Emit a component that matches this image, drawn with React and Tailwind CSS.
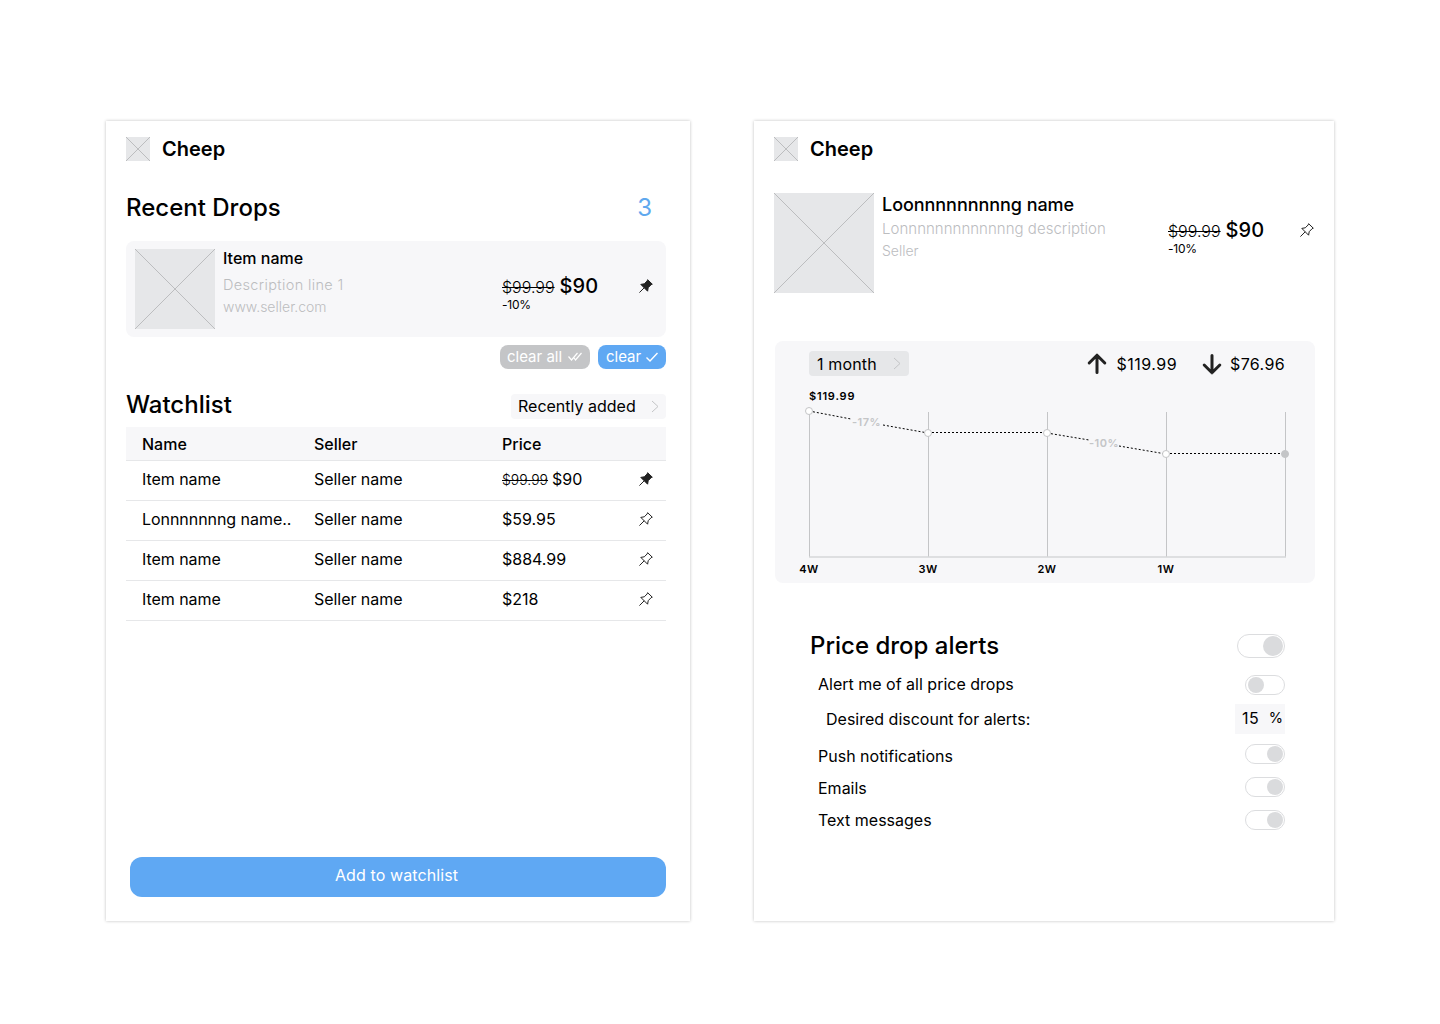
import React, { useState } from 'react';

const watchlist = [
    { name: 'Item name', seller: 'Seller name', price: '$90', oldPrice: '$99.99', pinned: true },
    { name: 'Lonnnnnnng name..', seller: 'Seller name', price: '$59.95' },
    { name: 'Item name', seller: 'Seller name', price: '$884.99' },
    { name: 'Item name', seller: 'Seller name', price: '$218' },
];

const history = [
    { x: 34, y: 70, label: '4W' },
    { x: 153, y: 92, label: '3W' },
    { x: 272, y: 92, label: '2W' },
    { x: 391, y: 113, label: '1W' },
    { x: 510, y: 113 },
];

const Placeholder = ({ className }) => (
    <svg className={`shrink-0 bg-[#e6e7e9] ${className}`} viewBox="0 0 100 100" preserveAspectRatio="none">
        <path d="M0 0L100 100M100 0L0 100" stroke="#bcbdbf" strokeWidth="1" vectorEffect="non-scaling-stroke" />
    </svg>
);

const Pin = ({ filled }) => (
    <svg width="14" height="14" viewBox="0 0 14 14" fill="none" stroke="#222" strokeLinejoin="round" className="shrink-0">
        <path d="M8.6 0.7L13.3 5.2L12.1 5.7L9.2 8.7L8.6 12.2L1.8 5.4L5.3 4.8L8.2 1.9Z" fill={filled ? '#222' : 'none'} />
        <path d="M5.2 8.8L0.4 13.6" />
    </svg>
);

const Chevron = () => (
    <svg width="8" height="13" viewBox="0 0 8 13" fill="none" stroke="#c4c5c7">
        <path d="M1 1l6 5.5L1 12" />
    </svg>
);

const Arrow = ({ down }) => (
    <svg width="20" height="22" viewBox="0 0 20 22" fill="none" stroke="#222" strokeWidth="3" strokeLinecap="round" strokeLinejoin="round" className={down ? 'rotate-180' : ''}>
        <path d="M10 19.5V2.5M2.2 10L10 2.2l7.8 7.8" />
    </svg>
);

const Header = () => (
    <div className="flex h-6 items-center gap-3">
        <Placeholder className="size-6" />
        <h1 className="text-[20px] leading-6 font-semibold">Cheep</h1>
    </div>
);

const Price = () => (
    <div>
        <div className="flex h-6 items-baseline gap-[5px] leading-6">
            <span className="text-[16px] font-light line-through">$99.99</span>
            <span className="text-[20px] font-medium">$90</span>
        </div>
        <div className="text-[12px] leading-[14px] tracking-[-0.2px]">-10%</div>
    </div>
);

const Toggle = ({ on, large }) => (
    <button
        className={`flex items-center rounded-full border border-[#dcdddf] bg-white ${large ? 'h-6 w-12 px-px' : 'h-5 w-10 px-px'} ${on ? 'justify-end' : 'justify-start pl-0.5'}`}
    >
        <span className={`rounded-full bg-[#dadbdd] ${large ? 'size-5' : 'size-4'}`} />
    </button>
);

const PriceChart = () => (
    <svg className="absolute inset-0 font-['Inter',sans-serif]" width="540" height="242" viewBox="0 0 540 242">
        {history.map((p) => (
            <path key={p.x} d={`M${p.x + 0.5} 71V216`} stroke="#c4c5c7" />
        ))}
        <path d="M34 216H511" stroke="#d6d7d9" strokeWidth="1.5" />
        <g stroke="#000" strokeWidth="1" strokeDasharray="2 2">
            <path d="M34 70L76 78M108 84L153 92M153 91.5H272M272 92L314 99M344 105L391 113M391 112.5H510" />
        </g>
        {history.map((p, i) => (
            <circle key={p.x} cx={p.x} cy={p.y} r="3.5" fill={i === 4 ? '#c4c5c7' : '#fff'} stroke="#c4c5c7" />
        ))}
        <g fontSize="11" fontWeight="600" letterSpacing="0.5">
            <text x="34" y="59" letterSpacing="0.8">$119.99</text>
            <g fill="#c4c5c7">
                <text x="77" y="85">-17%</text>
                <text x="314" y="106">-10%</text>
            </g>
            {history.filter((p) => p.label).map((p) => (
                <text key={p.label} x={p.x} y="232" textAnchor="middle">{p.label}</text>
            ))}
        </g>
    </svg>
);

const WatchlistPanel = () => (
    <section className="flex h-[800px] w-[584px] flex-col bg-white pt-4 pr-6 pb-6 pl-5 shadow-[0_0_3px_rgba(0,0,0,0.25)]">
        <Header />
        <div className="mt-[31px] flex h-8 items-center justify-between pr-3.5 text-[24px] font-medium">
            <h2>Recent Drops</h2>
            <span className="font-normal text-[#5fa8ee]">3</span>
        </div>

        <div className="mt-[17px] flex h-24 items-center rounded-lg bg-[#f7f7f9] pr-[13px] pl-[9px]">
            <Placeholder className="size-20" />
            <div className="ml-2 w-[279px] self-start pt-[5px]">
                <div className="text-[16px] leading-6 font-medium">Item name</div>
                <div className="mt-1 leading-[22px] text-[#bcbdbf]">
                    <p className="text-[14.5px] font-light tracking-[0.35px]">Description line 1</p>
                    <p className="text-[14px] font-light">www.seller.com</p>
                </div>
            </div>
            <div className="pt-2"><Price /></div>
            <div className="ml-auto -mt-1.5"><Pin filled /></div>
        </div>

        <div className="mt-2 flex justify-end gap-2 text-[15px] text-white">
            <button className="flex h-6 w-[90px] items-center justify-between rounded-lg bg-[#c4c5c7] px-[7px]">
                clear all
                <svg width="16" height="10" viewBox="0 0 16 10" fill="none" stroke="#fff" strokeWidth="1.2">
                    <path d="M1.5 4.5l3 3.5L10.5 1M6.5 5l2 3L14.5 1" />
                </svg>
            </button>
            <button className="flex h-6 w-[68px] items-center justify-between rounded-lg bg-[#5fa8f3] px-2">
                clear
                <svg width="12" height="10" viewBox="0 0 12 10" fill="none" stroke="#fff" strokeWidth="1.4">
                    <path d="M0.5 5.5l3.5 3.5L11.5 1" />
                </svg>
            </button>
        </div>

        <div className="mt-5 flex h-8 items-center justify-between">
            <h2 className="text-[24px] font-medium">Watchlist</h2>
            <button className="mt-[3px] flex h-[25px] w-[155px] items-center justify-between rounded bg-[#f7f7f9] px-[7px] text-[16px]">
                <span className="pb-0.5">Recently added</span>
                <Chevron />
            </button>
        </div>

        <div className="mt-1.5 text-[16px]">
            <div className="grid h-[34px] grid-cols-[172px_188px_1fr] items-center border-b border-[#e6e7e9] bg-[#f7f7f9] pl-4 font-medium">
                <span>Name</span>
                <span>Seller</span>
                <span>Price</span>
            </div>
            {watchlist.map((item, i) => (
                <div key={i} className="grid h-10 grid-cols-[172px_188px_1fr_auto] items-center border-b border-[#e6e7e9] pr-[13px] pb-[3px] pl-4">
                    <span className="tracking-[-0.05px]">{item.name}</span>
                    <span className="tracking-[-0.05px]">{item.seller}</span>
                    <span>
                        {item.oldPrice && <span className="mr-1 text-[14px] font-light line-through">{item.oldPrice}</span>}
                        {item.price}
                    </span>
                    <Pin filled={item.pinned} />
                </div>
            ))}
        </div>

        <button className="mt-auto ml-1 h-10 rounded-xl bg-[#5fa8f3] pr-[3px] pb-1 text-[16px] tracking-[0.1px] text-white">Add to watchlist</button>
    </section>
);

const DetailsPanel = () => {
    const [alerts, setAlerts] = useState({ all: false, push: true, email: true, text: true });
    const toggle = (key) => () => setAlerts({ ...alerts, [key]: !alerts[key] });

    return (
        <section className="h-[800px] w-[580px] bg-white pt-4 pr-[19px] pl-5 shadow-[0_0_3px_rgba(0,0,0,0.25)]">
            <Header />
            <div className="mt-8 flex h-[100px]">
                <Placeholder className="size-[100px]" />
                <div className="ml-2 w-[286px]">
                    <div className="text-[18px] leading-6 font-medium tracking-[-0.05px]">Loonnnnnnnnng name</div>
                    <div className="mt-px leading-[22px] text-[#bcbdbf]">
                        <p className="text-[15px] font-light tracking-[0.03px]">Lonnnnnnnnnnnnng description</p>
                        <p className="text-[14px] font-light">Seller</p>
                    </div>
                </div>
                <div className="pt-[25px]"><Price /></div>
                <div className="ml-auto pt-[30px] pr-px"><Pin /></div>
            </div>

            <div className="relative mt-12 ml-px h-[242px] rounded-lg bg-[#f7f7f9]">
                <PriceChart />
                <div className="flex items-center pt-2.5 pr-[30px] pl-[34px] text-[16px]">
                    <button className="flex h-[25px] w-[100px] items-center justify-between rounded bg-[#e6e7e9] px-2">
                        <span className="tracking-[0.15px]">1 month</span>
                        <Chevron />
                    </button>
                    <span className="ml-auto flex items-center gap-[9px] tracking-[0.5px]"><Arrow /> $119.99</span>
                    <span className="ml-[25px] flex items-center gap-2 tracking-[0.35px]"><Arrow down /> $76.96</span>
                </div>
            </div>

            <div className="mt-[47px] pr-[30px] pl-9 text-[16px]">
                <div className="flex h-8 items-center justify-between">
                    <h2 className="text-[24px] font-medium">Price drop alerts</h2>
                    <Toggle on large />
                </div>
                <div className="mt-[7px] flex h-8 items-center justify-between pl-2">
                    <span className="pb-0.5">Alert me of all price drops</span>
                    <span onClick={toggle('all')}><Toggle on={alerts.all} /></span>
                </div>
                <div className="mt-[3px] flex h-[30px] items-center justify-between pl-4">
                    Desired discount for alerts:
                    <span className="flex h-[30px] w-[50px] items-center justify-between bg-[#f7f7f9] pr-0.5 pb-0.5 pl-[7px]">
                        <span className="tracking-[0.5px]">15</span>
                        <span className="text-[14.5px]">%</span>
                    </span>
                </div>
                <div className="mt-1.5 flex h-8 items-center justify-between pl-2">
                    Push notifications
                    <span onClick={toggle('push')} className="pb-1"><Toggle on={alerts.push} /></span>
                </div>
                <div className="flex h-8 items-center justify-between pl-2">
                    Emails
                    <span onClick={toggle('email')} className="pb-0.5"><Toggle on={alerts.email} /></span>
                </div>
                <div className="flex h-8 items-center justify-between pl-2">
                    Text messages
                    <span onClick={toggle('text')}><Toggle on={alerts.text} /></span>
                </div>
            </div>
        </section>
    );
};

export default function App() {
    return (
        <main className="flex h-[1024px] w-[1440px] gap-16 bg-white pt-[121px] pl-[106px] font-['Inter',sans-serif] text-black">
            <WatchlistPanel />
            <DetailsPanel />
        </main>
    );
}
